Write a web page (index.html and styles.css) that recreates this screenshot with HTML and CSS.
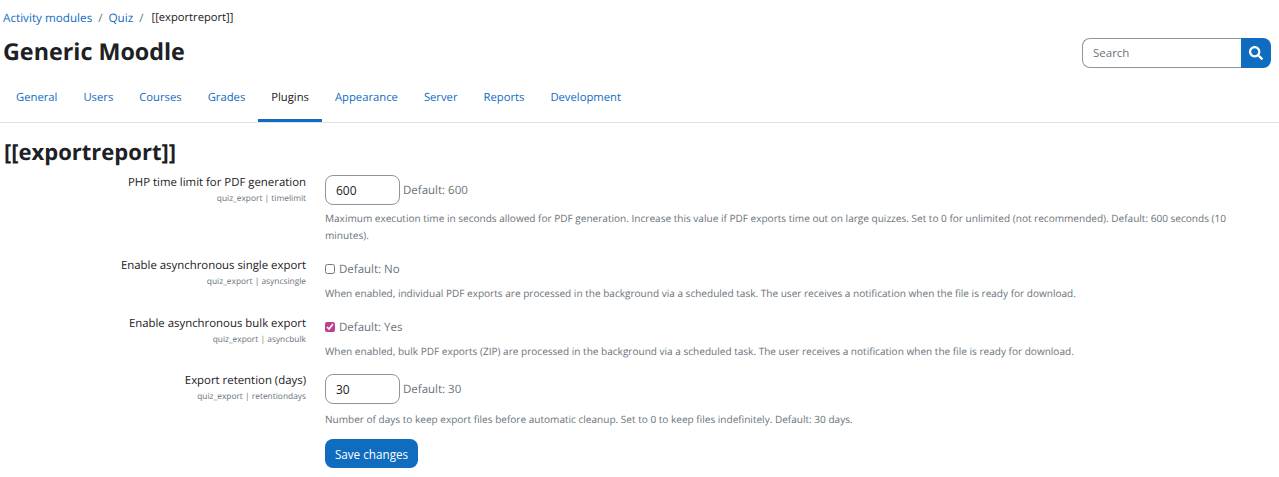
FILE: index.html
```html
<!DOCTYPE html>
<html lang="en">
<head>
<meta charset="utf-8">
<title>[[exportreport]]</title>
<link rel="stylesheet" href="styles.css">
</head>
<body>
<header class="page-head">
  <nav class="crumbs">
    <a href="#">Activity modules</a><span class="sep">/</span><a href="#">Quiz</a><span class="sep">/</span><span class="cur">[[exportreport]]</span>
  </nav>
  <div class="title-row">
    <h1>Generic Moodle</h1>
    <form class="search">
      <input class="search-input" type="text" placeholder="Search">
      <button class="search-btn" type="button" aria-label="Search">
        <svg width="14" height="14" viewBox="0 0 512 512"><path fill="#fff" d="M505 442.700L405.300 343c-4.500-4.500-10.600-7-17-7H372c27.600-35.300 44-79.700 44-128C416 93.100 322.900 0 208 0S0 93.100 0 208s93.100 208 208 208c48.300 0 92.700-16.400 128-44v16.300c0 6.400 2.500 12.500 7 17l99.700 99.700c9.400 9.400 24.600 9.400 33.900 0l28.300-28.300c9.400-9.400 9.400-24.600.1-34zM208 336c-70.700 0-128-57.200-128-128 0-70.700 57.200-128 128-128 70.700 0 128 57.200 128 128 0 70.700-57.200 128-128 128z"/></svg>
      </button>
    </form>
  </div>
  <nav class="tabs">
    <a class="tab" href="#">General</a>
    <a class="tab" href="#">Users</a>
    <a class="tab" href="#">Courses</a>
    <a class="tab" href="#">Grades</a>
    <a class="tab active" href="#">Plugins</a>
    <a class="tab" href="#">Appearance</a>
    <a class="tab" href="#">Server</a>
    <a class="tab" href="#">Reports</a>
    <a class="tab" href="#">Development</a>
  </nav>
</header>
<main class="content">
  <h2>[[exportreport]]</h2>
  <div class="setting s-time">
    <div class="label"><div class="name">PHP time limit for PDF generation</div><div class="key">quiz_export | timelimit</div></div>
    <div class="field">
      <div class="control"><input class="num" type="text" value="600"><span class="def">Default: 600</span></div>
      <p class="desc">Maximum execution time in seconds allowed for PDF generation. Increase this value if PDF exports time out on large quizzes. Set to 0 for unlimited (not recommended). Default: 600 seconds (10 minutes).</p>
    </div>
  </div>
  <div class="setting s-single">
    <div class="label"><div class="name">Enable asynchronous single export</div><div class="key">quiz_export | asyncsingle</div></div>
    <div class="field">
      <div class="control check"><input class="cb" type="checkbox"><span class="def">Default: No</span></div>
      <p class="desc">When enabled, individual PDF exports are processed in the background via a scheduled task. The user receives a notification when the file is ready for download.</p>
    </div>
  </div>
  <div class="setting s-bulk">
    <div class="label"><div class="name">Enable asynchronous bulk export</div><div class="key">quiz_export | asyncbulk</div></div>
    <div class="field">
      <div class="control check"><input class="cb" type="checkbox" checked><span class="def">Default: Yes</span></div>
      <p class="desc">When enabled, bulk PDF exports (ZIP) are processed in the background via a scheduled task. The user receives a notification when the file is ready for download.</p>
    </div>
  </div>
  <div class="setting s-ret">
    <div class="label"><div class="name">Export retention (days)</div><div class="key">quiz_export | retentiondays</div></div>
    <div class="field">
      <div class="control"><input class="num" type="text" value="30"><span class="def">Default: 30</span></div>
      <p class="desc">Number of days to keep export files before automatic cleanup. Set to 0 to keep files indefinitely. Default: 30 days.</p>
    </div>
  </div>
  <div class="actions"><button class="save" type="button">Save changes</button></div>
</main>
</body>
</html>
```
FILE: styles.css
```css
* { box-sizing: border-box; }
html, body { margin: 0; padding: 0; }
body {
  font-family: "Open Sans", "Noto Sans", "Liberation Sans", sans-serif;
  font-size: 12px;
  color: #1d2125;
  background: #fff;
  overflow: hidden;
  height: 477px;
  text-rendering: geometricPrecision;
}
a { color: #0f6cbf; text-decoration: none; }
.page-head { border-bottom: 1px solid #dee2e6; height: 123px; padding-top: 9px; }
.crumbs {
  display: flex;
  align-items: center;
  height: 17px;
  margin-left: 3px;
  font-size: 11.7px;
}
.sep { margin: 0 6px; color: #6a737b; }
.cur { color: #1d2125; font-size: 11.2px; margin-left: 2px; }
.title-row {
  display: flex;
  justify-content: space-between;
  height: 30px;
  margin-top: 12px;
  padding: 0 8px 0 3px;
}
h1 { margin: 0; font-size: 23.3px; font-weight: 700; line-height: 26px; }
.search { display: flex; height: 30px; }
.search-input {
  width: 159px;
  height: 30px;
  border: 1px solid #8f959e;
  border-right: 0;
  border-radius: 8px 0 0 8px;
  padding: 0 10px 2px;
  font: inherit;
  font-size: 11.5px;
  outline: none;
}
.search-input::placeholder { color: #6a737b; opacity: 1; }
.search-btn {
  width: 30px;
  height: 30px;
  border: 0;
  padding: 0;
  background: #0f6cbf;
  border-radius: 0 8px 8px 0;
  display: flex;
  align-items: center;
  justify-content: center;
}
.tabs { display: flex; margin-top: 6px; padding-left: 3px; }
.tab {
  display: block;
  height: 48px;
  padding: 0 13px;
  line-height: 48px;
  font-size: 11.25px;
  border-bottom: 3px solid transparent;
}
.tab.active { color: #1d2125; border-bottom-color: #0f6cbf; }
.content { padding: 0 8px 0 4px; }
h2 { margin: 0; padding-top: 14px; font-size: 22px; line-height: 30px; font-weight: 700; height: 52px; }
.setting { display: flex; }
.label { width: 302px; flex: none; text-align: right; }
.name { font-size: 11.4px; line-height: 15px; }
.key { font-size: 8.4px; line-height: 13px; margin-top: 2px; color: #6a737b; }
.s-ret .label { margin-top: -1px; }
.field { margin-left: 19px; flex: 1; min-width: 0; }
.control { display: flex; align-items: center; height: 30px; color: #6a737b; }
.check { height: 22px; }
.num {
  width: 75px;
  height: 30px;
  border: 1px solid #8f959e;
  border-radius: 8px;
  padding: 0 10px;
  font: inherit;
  font-size: 12px;
  color: #1d2125;
  outline: none;
}
.def { margin-left: 3px; font-size: 11.5px; }
.check .def { margin-left: 4px; }
.cb { width: 10px; height: 10px; margin: 0; accent-color: #c03f8c; }
.desc { margin: 0; font-size: 10.05px; line-height: 17px; color: #6a737b; }
.s-time { height: 83px; }
.s-time .desc { margin-top: 5px; }
.s-single { height: 58px; }
.s-single .desc { margin-top: 5px; }
.s-bulk { height: 58px; }
.s-bulk .desc { margin-top: 5px; }
.s-ret { height: 65px; }
.s-ret .desc { margin-top: 7px; }
.actions { padding-left: 321px; }
.save {
  height: 29px;
  width: 93px;
  border: 0;
  border-radius: 8px;
  background: #0f6cbf;
  color: #fff;
  font: inherit;
  font-size: 11.7px;
  padding: 0;
}
```
